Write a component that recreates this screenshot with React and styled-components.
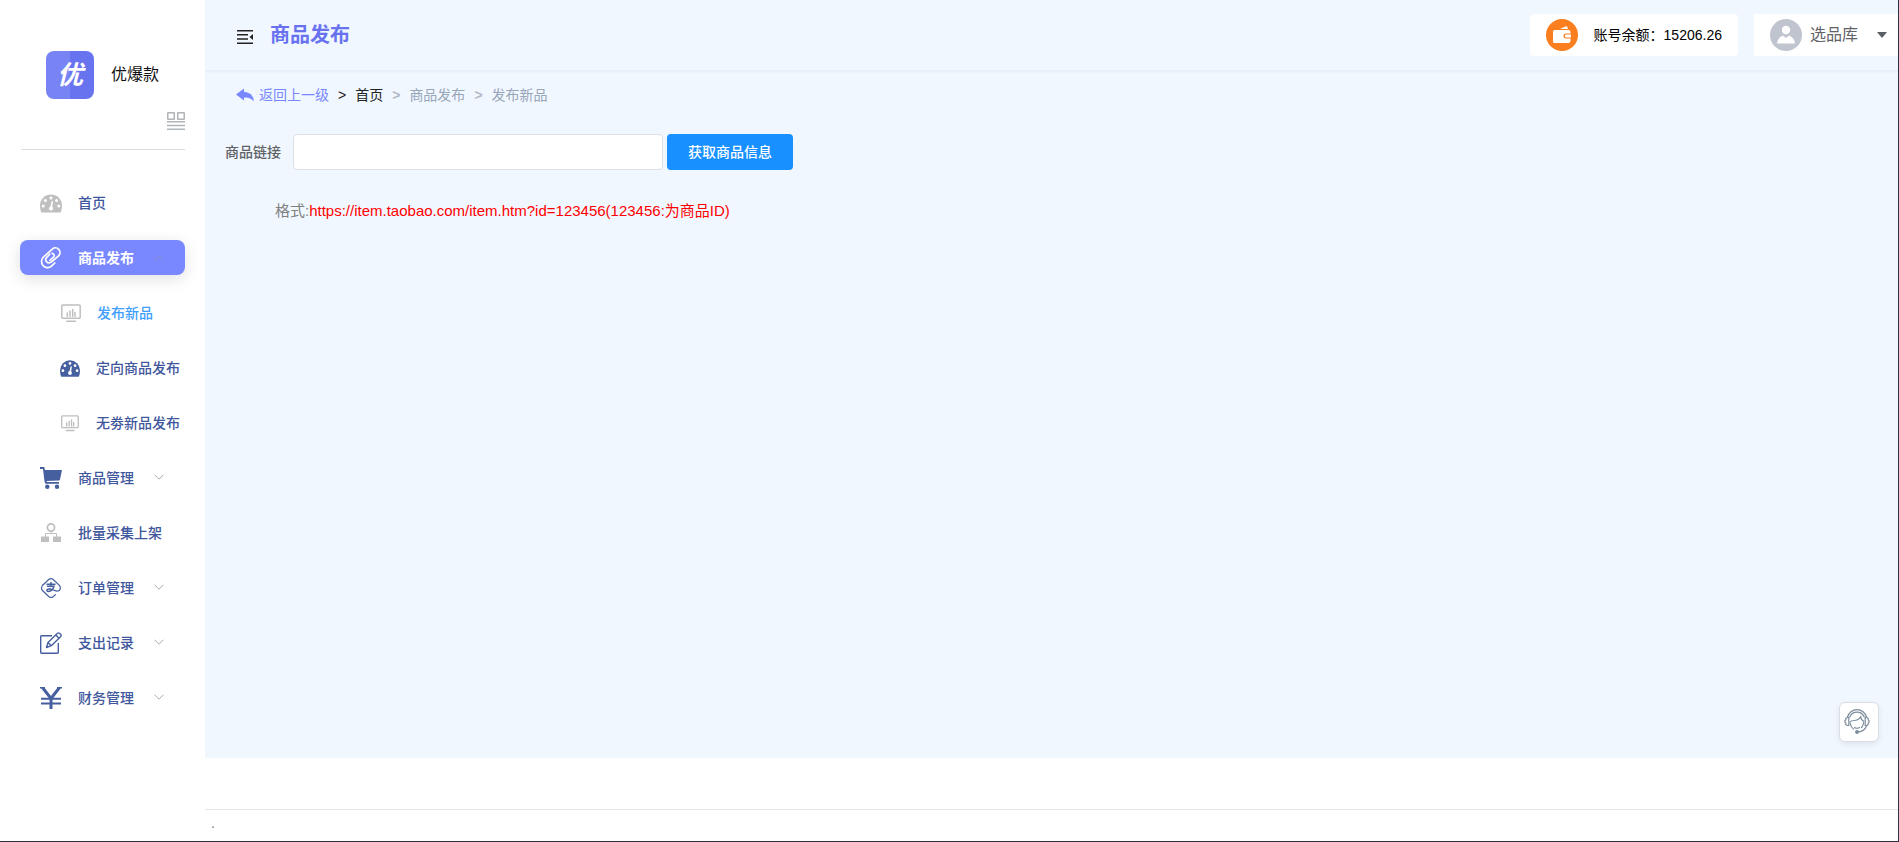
import React from "react";
import styled, { createGlobalStyle, css } from "styled-components";

const GlobalStyle = createGlobalStyle`
  * { box-sizing: border-box; }
  body {
    margin: 0;
    background: #fff;
    font-family: "Liberation Sans", "Noto Sans CJK SC", sans-serif;
    font-size: 14px;
    line-height: 20px;
    color: #303133;
  }
  a { color: inherit; text-decoration: none; }
  button, input { font: inherit; }
  svg { display: block; flex: none; }
`;

const Page = styled.div`
  display: flex;
  min-height: 100vh;
  border-right: 1px solid #2f2f45;
  border-bottom: 1px solid #2f2f45;
`;

/* Sidebar */
const Sidebar = styled.aside`
  flex: none;
  width: 205px;
  padding: 51px 20px 20px;
  background: #fff;
`;
const Brand = styled.div`
  display: flex;
  align-items: center;
  gap: 17px;
  padding-left: 26px;
`;
const Logo = styled.div`
  display: flex;
  align-items: center;
  justify-content: center;
  width: 48px;
  height: 48px;
  border-radius: 8px;
  background: linear-gradient(90deg, #7883f4 50%, #6873ef 50%);
  color: #fff;
  font-size: 26px;
  font-weight: 700;
  font-style: italic;
`;
const BrandName = styled.span`
  font-size: 16px;
  color: #111;
`;
const LayoutBar = styled.div`
  display: flex;
  justify-content: flex-end;
  padding: 13px 0 19px;
  margin-left: 1px;
  border-bottom: 1px solid #dcdfe2;
`;
const IconButton = styled.button`
  display: flex;
  padding: 0;
  border: 0;
  background: none;
  color: ${(p) => p.$color};
  cursor: pointer;
`;
const Menu = styled.nav`
  display: flex;
  flex-direction: column;
  gap: 20px;
  padding-top: 35px;
`;
const MenuItem = styled.a`
  display: flex;
  align-items: center;
  height: 35px;
  padding-left: ${(p) => (p.$sub ? 40 : 20)}px;
  border-radius: 8px;
  font-weight: 500;
  white-space: nowrap;
  color: #3f579c;
  ${(p) =>
    p.$current &&
    css`
      padding-left: 41px;
      color: #409eff;
    `}
  ${(p) =>
    p.$active &&
    css`
      background: #7988ff;
      color: #fff;
      font-weight: 700;
      box-shadow: 0 4px 16px rgba(0, 0, 0, 0.12);
    `}
`;
const MenuIcon = styled.span`
  display: flex;
  align-items: center;
  justify-content: center;
  width: ${(p) => (p.$sub ? 20 : 22)}px;
  margin-right: 16px;
  color: ${(p) => p.$color};
`;
const Chevron = styled.span`
  display: flex;
  margin-left: 20px;
  color: ${(p) => (p.$open ? "#858bc4" : "#a8abb2")};
`;

/* Content column */
const Content = styled.div`
  flex: 1;
  min-width: 0;
  display: flex;
  flex-direction: column;
`;
const Header = styled.header`
  display: flex;
  align-items: center;
  height: 71px;
  padding-left: 32px;
  background: #f0f7ff;
  border-bottom: 1px solid #e8eef5;
  box-shadow: 0 1px 2px rgba(0, 21, 41, 0.04);
  z-index: 1;
`;
const PageTitle = styled.h1`
  margin: 0 auto 0 17px;
  font-size: 20px;
  line-height: 28px;
  font-weight: 700;
  color: #6872ef;
`;
const HeaderCard = styled.div`
  display: flex;
  align-items: center;
  height: 42px;
  padding: 0 16px;
  gap: 16px;
  background: #fff;
  border-radius: 4px;
  color: #000;
`;
const UserButton = styled.button`
  display: flex;
  align-items: center;
  height: 42px;
  margin-left: 16px;
  padding: 0 11px 0 16px;
  gap: 8px;
  border: 0;
  background: #fff;
  font-size: 16px;
  color: #606266;
  cursor: pointer;
`;
const Caret = styled.span`
  margin-left: 11px;
  border: 5px solid transparent;
  border-top: 6px solid #5a5e66;
  border-bottom: 0;
`;
const Round = styled.span`
  display: flex;
  align-items: center;
  justify-content: center;
  width: 32px;
  height: 32px;
  border-radius: 50%;
  background: ${(p) => p.$bg};
`;
const Main = styled.main`
  flex: 1;
  padding: 14px 20px 20px;
  background: #f0f7ff;
`;
const Breadcrumb = styled.nav`
  display: flex;
  align-items: center;
  gap: 9px;
  padding-left: 11px;
  color: #98a5b8;
`;
const BackLink = styled.a`
  display: flex;
  align-items: center;
  gap: 5px;
  color: #7988ff;
`;
const Crumb = styled.a`
  color: ${(p) => (p.$dark ? "#222" : "inherit")};
`;
const Divider = styled.span`
  color: ${(p) => (p.$dark ? "#222" : "#b3bac6")};
  font-weight: ${(p) => (p.$dark ? 400 : 700)};
`;
const Form = styled.form`
  display: flex;
  align-items: center;
  padding-top: 29px;
`;
const Label = styled.label`
  margin-right: 12px;
  font-weight: 500;
  color: #606266;
`;
const Input = styled.input`
  width: 370px;
  height: 36px;
  padding: 0 15px;
  border: 1px solid #dcdfe6;
  border-radius: 4px;
  background: #fff;
  color: #606266;
  outline: 0;
`;
const Submit = styled.button`
  width: 126px;
  height: 36px;
  margin-left: 4px;
  padding: 0;
  border: 0;
  border-radius: 4px;
  background: #1890ff;
  color: #fff;
  font-weight: 500;
  cursor: pointer;
`;
const Hint = styled.p`
  margin: 31px 0 0;
  padding-left: 50px;
  font-size: 15px;
  color: #808080;
`;
const Sample = styled.span`
  color: #f00;
`;
const Footer = styled.footer`
  padding-top: 51px;
`;
const FooterText = styled.div`
  height: 32px;
  padding: 3px 6px;
  border-top: 1px solid #e6e6e6;
  color: #777;
`;
const ServiceButton = styled.button`
  position: fixed;
  right: 20px;
  bottom: 100px;
  display: flex;
  align-items: center;
  justify-content: center;
  width: 40px;
  height: 40px;
  padding: 0 4px 2px 0;
  border: 1px solid #d9dce2;
  border-radius: 6px;
  background: #fff;
  box-shadow: 0 2px 6px rgba(0, 0, 0, 0.08);
  color: #7c8b9b;
  cursor: pointer;
`;

const Gauge = ({ size }) => (
  <svg width={size} height={size} viewBox="0 0 22 22">
    <path fill="currentColor" d="M1.3 20.5Q0 17.500 0 13.500A11 11 0 0 1 22 13.500Q22 17.500 20.7 20.500Z" />
    <g fill="#fff">
      <circle cx="3.2" cy="14" r="1.5" />
      <circle cx="5.4" cy="8.400" r="1.5" />
      <circle cx="11" cy="6" r="1.5" />
      <circle cx="16.6" cy="8.400" r="1.5" />
      <circle cx="18.8" cy="14" r="1.5" />
      <circle cx="11" cy="16.500" r="2.100" />
      <path d="m11.700 9 1.400.300-1.100 7-1.800-.300Z" />
    </g>
  </svg>
);
const Clip = () => (
  <svg width="22" height="22" viewBox="0 0 22 22" fill="none" stroke="currentColor" strokeWidth="1.700" strokeLinecap="round">
    <path d="M9.800 7.200 6.800 10.400A3.200 3.200 0 0 0 11.300 15L18.600 8.800A4.600 4.600 0 0 0 12.300 2.100L3.700 9.900A5.900 5.900 0 0 0 11.500 19.200L14.800 16" />
    <path d="M10 13.300 13.800 9.800A2.300 2.300 0 0 0 12 6.300" />
  </svg>
);
const Monitor = ({ size }) => (
  <svg width={size} height={size} viewBox="0 0 20 20" fill="none" stroke="currentColor" strokeWidth="1.500">
    <rect x=".800" y="2" width="18.400" height="13.200" rx="1" />
    <path d="M6.300 13.200V10M9 13.200V8M11.700 13.200V6.500M14 13.200V9.500M5.800 18.300H14.500" strokeLinecap="round" />
  </svg>
);
const Cart = () => (
  <svg width="22" height="22" viewBox="0 0 22 22" fill="currentColor">
    <path d="M0 0H4.200L5 3H22L20 12.500Q19.800 13.300 19 13.500L6.500 13.900 7 15H19V16.800H6Q5.300 16.800 5 16L4.400 13.500 3 2H0Z" />
    <circle cx="7.300" cy="19.800" r="2.200" />
    <circle cx="17" cy="19.800" r="2.200" />
  </svg>
);
const Org = () => (
  <svg width="22" height="22" viewBox="0 0 22 22" fill="none" stroke="currentColor">
    <circle cx="11" cy="5.500" r="3.600" strokeWidth="1.700" />
    <path d="M11 9.500V11.500M5.500 15V11.500H16.500V15" />
    <path d="M1 14.500H9V20H1ZM13 14.500H21V20H13Z" fill="currentColor" stroke="none" />
  </svg>
);
const Pay = () => (
  <svg width="22" height="22" viewBox="0 0 22 22" fill="none" stroke="currentColor" strokeWidth="1.200" strokeLinecap="round">
    <path d="M15.500 17.600 13 19.700Q11 21.200 9 19.700L2.400 13.500Q.700 11 2.400 8.500L9 2.300Q11 .800 13 2.300L19.600 8.500Q21.300 11.500 19.300 13.500Q17.500 14.500 15 13.600L10 11.700" />
    <path d="M7 7.200H15M11 5.500V9.300M7.500 9.300H14Q12.500 14 8.500 14.600Q6.500 14.300 7 12.800Q8 11.600 10 12" strokeWidth="1.500" />
  </svg>
);
const Edit = () => (
  <svg width="22" height="22" viewBox="0 0 22 22" fill="none" stroke="currentColor" strokeWidth="1.400" strokeLinejoin="round">
    <path d="M12 3.700H1.500Q.700 3.700.700 4.500V20.300Q.700 21.200 1.500 21.200H17.300Q18.300 21.200 18.300 20.300V11" />
    <path d="M6.500 15.500 8 10.500 17.500 1.200Q18.500.500 19.500 1.200L20.800 2.500Q21.500 3.500 20.800 4.400L11.300 13.700ZM15.800 3 19 6.200M8 10.500 11.300 13.700" />
  </svg>
);
const Yen = () => (
  <svg width="22" height="22" viewBox="0 0 22 22" fill="none" stroke="currentColor" strokeWidth="3">
    <path d="M2.500.500 11 11.500 19.500.500M11 11V22" />
    <path d="M1 11.700H21M1 16.500H21" strokeWidth="2" />
    <path d="M0 .700H5M17 .700H22" strokeWidth="1.400" />
  </svg>
);
const Arrow = ({ open }) => (
  <svg width="10" height="8" viewBox="0 0 10 8" fill="none" stroke="currentColor">
    <path d={open ? "M.500 6.300 5 1.800 9.500 6.300" : "M.500.700 5 5.200 9.500.700"} />
  </svg>
);
const GridIcon = () => (
  <svg width="18" height="18" viewBox="0 0 18 18" fill="none" stroke="currentColor" strokeWidth="1.500">
    <rect x=".750" y=".750" width="6.500" height="6.500" rx=".500" />
    <rect x="10.750" y=".750" width="6.500" height="6.500" rx=".500" />
    <path d="M0 9.700H18M0 13.500H18M0 17.200H18" />
  </svg>
);
const Fold = () => (
  <svg width="16" height="18" viewBox="0 -4 16 18" fill="currentColor">
    <path d="M0 0H16V1.600H0ZM0 4H11V5.600H0ZM0 8.200H11V9.800H0ZM0 12.400H16V14H0ZM16 4V10L12.500 7Z" />
  </svg>
);
const Reply = () => (
  <svg width="18" height="14" viewBox="0 0 18 14" fill="currentColor">
    <path d="M0 6.500 8 .500V3.700Q17.500 4.500 17.800 13.500Q14.500 9 8 9.500V12.500Z" />
  </svg>
);
const Wallet = () => (
  <svg width="20" height="20" viewBox="0 0 20 20" fill="#fff">
    <path d="M8 4 14 1.200Q14.800 1 15.200 1.800L16 4ZM2.500 5H16.500Q18.500 5 18.500 7V8.500H14A2.500 2.500 0 0 0 14 13.500H18.500V16Q18.500 18 16.500 18H2.500Q1 18 1 16.500V6.500Q1 5 2.500 5Z" />
    <path d="M14.300 9.500H19V12.500H14.300A1.500 1.500 0 0 1 14.300 9.500Z" />
  </svg>
);
const Person = () => (
  <svg width="20" height="20" viewBox="0 0 20 20" fill="#fff">
    <circle cx="10" cy="5" r="4.200" />
    <path d="M1 18.500Q1.300 13 6.800 10.500L10 13 13.200 10.500Q18.700 13 19 18.500Z" />
  </svg>
);
const Headset = () => (
  <svg width="26" height="26" viewBox="0 0 26 26" fill="none" stroke="currentColor" strokeWidth="1.200" strokeLinecap="round">
    <path d="M3.500 9A9.800 9.800 0 0 1 22.500 9M5.800 9A7.700 7.700 0 0 1 20.200 9" />
    <path d="M4.800 9.500H3L1.800 10.500V12L1 12.500V14.500L1.800 15V16.500L3 17.500H4.800ZM21.200 9.500H23L24.200 10.500V12L25 12.500V14.500L24.200 15V16.500L23 17.500H21.200Z" />
    <path d="M6 14.200Q7 12.500 10 12.500 14.500 12.300 16.700 8.800 17 12 19.800 13.300M6.300 15.500Q7 19.500 9.500 21M19.700 14.500Q19.300 17.500 17.500 19.500M10.500 19.500Q13 21 15.500 19.500M22.700 17.500Q20.500 23.500 14.500 23.800" />
    <circle cx="13" cy="24" r="1.300" fill="currentColor" />
  </svg>
);

const GREY = "#bfbfbf";
const NAVY = "#465f9f";

const MENU = [
  { text: "首页", icon: <Gauge size={22} />, color: GREY },
  { text: "商品发布", icon: <Clip />, color: "#fff", active: true, arrow: true },
  { text: "发布新品", icon: <Monitor size={20} />, color: GREY, sub: true, current: true },
  { text: "定向商品发布", icon: <Gauge size={20} />, color: NAVY, sub: true },
  { text: "无劵新品发布", icon: <Monitor size={18} />, color: GREY, sub: true },
  { text: "商品管理", icon: <Cart />, color: NAVY, arrow: true },
  { text: "批量采集上架", icon: <Org />, color: GREY },
  { text: "订单管理", icon: <Pay />, color: NAVY, arrow: true },
  { text: "支出记录", icon: <Edit />, color: NAVY, arrow: true },
  { text: "财务管理", icon: <Yen />, color: NAVY, arrow: true },
];

export default function App() {
  return (
    <>
      <GlobalStyle />
      <Page>
        <Sidebar>
          <Brand>
            <Logo>优</Logo>
            <BrandName>优爆款</BrandName>
          </Brand>
          <LayoutBar>
            <IconButton type="button" aria-label="布局" $color="#b0b5ba">
              <GridIcon />
            </IconButton>
          </LayoutBar>
          <Menu>
            {MENU.map((m) => (
              <MenuItem key={m.text} href="#" $sub={m.sub} $active={m.active} $current={m.current}>
                <MenuIcon $color={m.color} $sub={m.sub}>{m.icon}</MenuIcon>
                {m.text}
                {m.arrow && (
                  <Chevron $open={m.active}>
                    <Arrow open={m.active} />
                  </Chevron>
                )}
              </MenuItem>
            ))}
          </Menu>
        </Sidebar>
        <Content>
          <Header>
            <IconButton type="button" aria-label="收起菜单" $color="#222">
              <Fold />
            </IconButton>
            <PageTitle>商品发布</PageTitle>
            <HeaderCard>
              <Round $bg="#fb7f1e"><Wallet /></Round>
              <span>账号余额：15206.26</span>
            </HeaderCard>
            <UserButton type="button">
              <Round $bg="#c0c4cf"><Person /></Round>
              选品库
              <Caret />
            </UserButton>
          </Header>
          <Main>
            <Breadcrumb>
              <BackLink href="#">
                <Reply />
                返回上一级
              </BackLink>
              <Divider $dark>&gt;</Divider>
              <Crumb href="#" $dark>首页</Crumb>
              <Divider>&gt;</Divider>
              <Crumb href="#">商品发布</Crumb>
              <Divider>&gt;</Divider>
              <Crumb href="#">发布新品</Crumb>
            </Breadcrumb>
            <Form onSubmit={(e) => e.preventDefault()}>
              <Label htmlFor="link">商品链接</Label>
              <Input id="link" type="text" />
              <Submit type="submit">获取商品信息</Submit>
            </Form>
            <Hint>
              格式:<Sample>https://item.taobao.com/item.htm?id=123456(123456:为商品ID)</Sample>
            </Hint>
          </Main>
          <Footer>
            <FooterText>.</FooterText>
          </Footer>
        </Content>
        <ServiceButton type="button" aria-label="在线客服">
          <Headset />
        </ServiceButton>
      </Page>
    </>
  );
}
